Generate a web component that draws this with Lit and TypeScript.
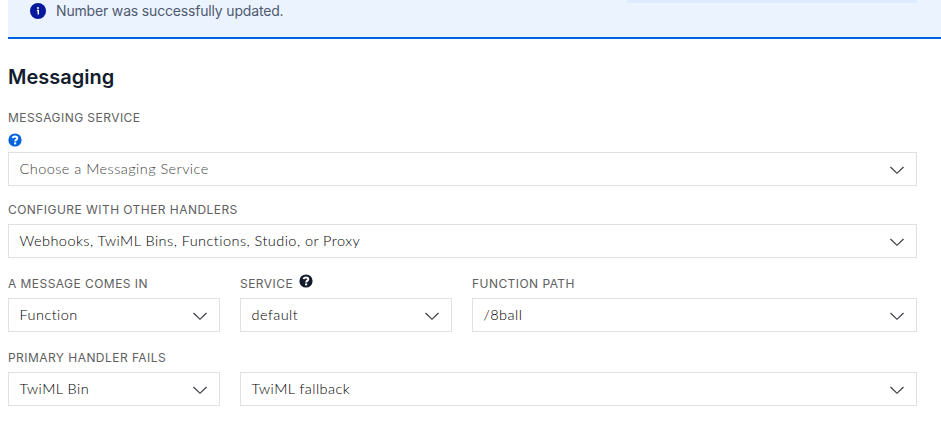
import { LitElement, html, css, svg } from "lit";
import { customElement, property } from "lit/decorators.js";

@customElement("help-icon")
class HelpIcon extends LitElement {
  static styles = css`
    :host { display: block; width: 14px; height: 14px; }
    svg { display: block; }
    .mark { fill: none; stroke: #fff; stroke-width: 2; }
    .dot { fill: #fff; }
  `;
  render() {
    return html`<svg width="14" height="14" viewBox="0 0 14 14">
      ${svg`<circle cx="7" cy="7" r="6.6" fill="currentColor"></circle>
      <path class="mark" d="M4.6 5.2C4.8 3.8 5.7 3.4 6.9 3.4c1.4 0 2.4.7 2.4 1.8C9.3 6.7 7.2 6.6 7.2 8.5"></path>
      <rect class="dot" x="6.1" y="9.4" width="2.1" height="2"></rect>`}
    </svg>`;
  }
}

@customElement("select-box")
class SelectBox extends LitElement {
  @property() value = "";
  static styles = css`
    :host {
      box-sizing: border-box;
      display: flex;
      align-items: center;
      justify-content: space-between;
      height: 34px;
      border: 1px solid #e1e1e1;
      padding: 0 12px 0 10.5px;
      background: #fff;
      color: #000;
      font: 300 14.5px/20px Lato, "Noto Sans", sans-serif;
      letter-spacing: 0.45px;
    }
    .value { white-space: nowrap; padding-bottom: 1px; }
    svg { display: block; margin-top: 1px; }
    path { fill: none; stroke: #30343c; stroke-width: 1.1; }
  `;
  render() {
    return html`<span class="value">${this.value}</span>
      <svg width="14" height="10" viewBox="0 0 14 10"><path d="M0.5 2L7 8.3L13.5 2"></path></svg>`;
  }
}

@customElement("app-root")
class AppRoot extends LitElement {
  static styles = css`
    :host {
      display: block;
      height: 438px;
      overflow: hidden;
      background: #fff;
      font-family: Inter, "Liberation Sans", sans-serif;
    }
    .banner {
      position: relative;
      box-sizing: border-box;
      display: flex;
      align-items: flex-start;
      gap: 10px;
      height: 39px;
      margin-left: 8px;
      padding: 1px 0 0 22px;
      background: #ebf3ff;
      border-bottom: 2px solid #0263e0;
      color: #4f5970;
      font-size: 14px;
      line-height: 20px;
      letter-spacing: -0.17px;
    }
    .info { display: block; margin-top: 2px; }
    .toast-edge {
      position: absolute;
      top: 0;
      left: 618px;
      width: 292px;
      height: 3px;
      background: #deebff;
      border-radius: 0 0 3px 3px;
    }
    h2 {
      margin: 24px 0 0 8px;
      font-size: 20px;
      line-height: 28px;
      font-weight: 600;
      color: #121c2d;
    }
    form {
      display: grid;
      grid-template-columns: 212px 212px 445px;
      column-gap: 20px;
      margin: 19px 24px 0 8px;
    }
    .field { display: flex; flex-direction: column; }
    .full { grid-column: 1 / -1; }
    .two { grid-column: 2 / -1; justify-content: flex-end; }
    .gap { margin-top: 16px; }
    .low { margin-top: 18px; }
    .label {
      display: flex;
      height: 16px;
      margin-bottom: 6px;
      color: #606060;
      font-size: 12px;
      line-height: 16px;
      letter-spacing: 0.45px;
      white-space: nowrap;
    }
    .blue { color: #0263e0; margin: 1px 0 5px; }
    .dark { color: #121c2d; margin: -2px 0 0 5.5px; }
    .placeholder { color: #444; }
  `;
  render() {
    return html`
      <div class="banner">
        <svg class="info" width="16" height="16" viewBox="0 0 16 16">
          <circle cx="8" cy="8" r="8" fill="#06189b"></circle>
          <circle cx="8" cy="4.9" r="1" fill="#fff"></circle>
          <path d="M6.9 7.5H8.3V11.5" fill="none" stroke="#fff" stroke-width="1.4"></path>
        </svg>
        <span>Number was successfully updated.</span>
        <div class="toast-edge"></div>
      </div>
      <h2>Messaging</h2>
      <form>
        <div class="field full">
          <div class="label">MESSAGING SERVICE</div>
          <help-icon class="blue"></help-icon>
          <select-box class="placeholder" value="Choose a Messaging Service"></select-box>
        </div>
        <div class="field full gap">
          <div class="label">CONFIGURE WITH OTHER HANDLERS</div>
          <select-box value="Webhooks, TwiML Bins, Functions, Studio, or Proxy"></select-box>
        </div>
        <div class="field low">
          <div class="label">A MESSAGE COMES IN</div>
          <select-box value="Function"></select-box>
        </div>
        <div class="field low">
          <div class="label">SERVICE<help-icon class="dark"></help-icon></div>
          <select-box value="default"></select-box>
        </div>
        <div class="field low">
          <div class="label">FUNCTION PATH</div>
          <select-box value="/8ball"></select-box>
        </div>
        <div class="field low">
          <div class="label">PRIMARY HANDLER FAILS</div>
          <select-box value="TwiML Bin"></select-box>
        </div>
        <div class="field low two">
          <select-box value="TwiML fallback"></select-box>
        </div>
      </form>
    `;
  }
}
